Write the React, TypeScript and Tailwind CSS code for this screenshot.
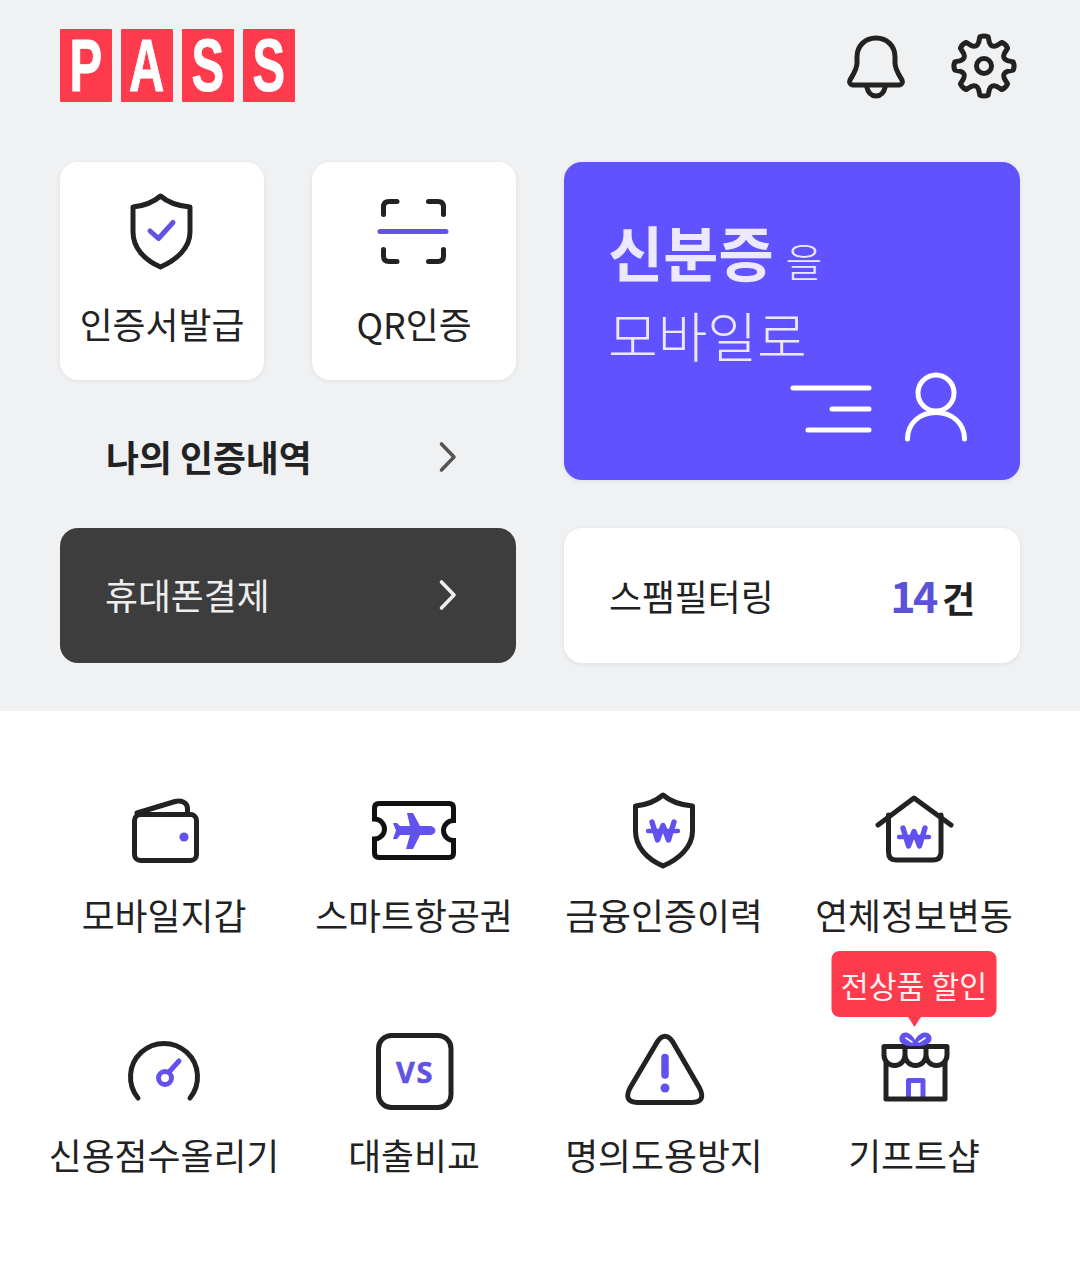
import React from "react";

const INK = "#222222";
const PURPLE = "#6152e0";

const gearPath = (() => {
  const cx = 984;
  const cy = 65;
  const pts: string[] = [];
  for (let k = 0; k < 8; k++) {
    const a = (k * 45 * Math.PI) / 180;
    const p = (r: number, d: number) => {
      const t = a + (d * Math.PI) / 180 - Math.PI / 2;
      return `${(cx + r * Math.cos(t)).toFixed(1)} ${(cy + r * Math.sin(t)).toFixed(1)}`;
    };
    const vt = a + (22.5 * Math.PI) / 180 - Math.PI / 2;
    const valley = `${(cx + 19.5 * Math.cos(vt)).toFixed(1)} ${(cy + 19.5 * Math.sin(vt)).toFixed(1)}`;
    pts.push(`${k === 0 ? "M" : "L"}${p(24, -13)} L${p(29.5, -8)} Q${p(31, 0)} ${p(29.5, 8)} L${p(24, 13)} Q${valley} ${p(24, 32)}`);
  }
  return pts.join(" ") + " Z";
})();

const Chevron = ({ color, className }: { color: string; className?: string }) => (
  <svg width="20" height="32" viewBox="0 0 20 32" fill="none" stroke={color} strokeWidth="3.6" strokeLinecap="round" strokeLinejoin="round" className={className}>
    <path d="M3.5 3 L16 16 L3.5 29" />
  </svg>
);

const Won = ({ x, y }: { x: number; y: number }) => (
  <g transform={`translate(${x} ${y})`} fill="none" stroke="#6152f0" strokeWidth="5.4" strokeLinecap="round" strokeLinejoin="round">
    <path d="M-11 -9 L-5.5 9 L0 -5.5 L5.5 9 L11 -9" />
    <path d="M-15 0 H15" strokeWidth="4.4" />
  </g>
);

const shieldD = "M160 196 C152 203 142 206 132.5 207 L132.5 232 C132.5 248 144 260 160 267 C176 260 189.5 248 189.5 232 L189.5 207 C178 206 168 203 160 196 Z";

const icons: Record<string, React.ReactNode> = {
  wallet: (
    <svg width="100" height="80" viewBox="114 790 100 80" fill="none">
      <rect x="134.5" y="814.5" width="62" height="46" rx="6" stroke={INK} strokeWidth="5" />
      <path d="M137 813 L175 801.5 C181 800 187 802 187.5 808 L187.5 814" stroke={INK} strokeWidth="5" strokeLinecap="round" />
      <circle cx="184" cy="837" r="4.6" fill="#6152f0" />
    </svg>
  ),
  ticket: (
    <svg width="100" height="80" viewBox="364 790 100 80" fill="none">
      <path
        d="M379 803.5 H449 Q453.5 803.5 453.5 808 V820.5 A10 10 0 0 0 453.5 840.5 V853 Q453.5 857.5 449 857.5 H379 Q374.5 857.5 374.5 853 V839 A10 10 0 0 0 374.5 819 V808 Q374.5 803.5 379 803.5 Z"
        stroke="#111111"
        strokeWidth="5"
      />
      <path
        d="M407 813 L413 813 L420 826 L431 826 Q435 827 435.5 830.5 Q435 834 431 835 L420 835 L413 849 L406 849 L410 835 L400 835 L397 839 L393 839 L396 830.5 L393 823 L397 823 L400 826 L410 826 Z"
        fill="#6152f0"
      />
    </svg>
  ),
  shieldWon: (
    <svg width="100" height="80" viewBox="614 790 100 80" fill="none">
      <path d={shieldD} transform="translate(503 599)" stroke={INK} strokeWidth="5" strokeLinejoin="round" />
      <Won x={663} y={831} />
    </svg>
  ),
  house: (
    <svg width="100" height="80" viewBox="864 790 100 80" fill="none" stroke={INK} strokeWidth="5" strokeLinecap="round" strokeLinejoin="round">
      <path d="M878 825 L914 798 L951 825" />
      <path d="M888.5 815 V852 Q888.5 860 896 860 H933 Q941 860 941 852 V815" />
      <Won x={914} y={837} />
    </svg>
  ),
  gauge: (
    <svg width="100" height="80" viewBox="114 1030 100 80" fill="none" strokeLinecap="round">
      <path d="M138 1098 A33.5 33.5 0 1 1 190 1098" stroke={INK} strokeWidth="5" />
      <circle cx="165" cy="1078" r="6.5" stroke="#6152f0" strokeWidth="5" />
      <path d="M169 1072 L179 1061" stroke="#6152f0" strokeWidth="5" />
    </svg>
  ),
  vs: (
    <svg width="100" height="80" viewBox="364 1030 100 80" fill="none">
      <rect x="378.5" y="1035.5" width="72.5" height="72" rx="13" stroke={INK} strokeWidth="5" />
      <text
        x="415"
        y="1083"
        textAnchor="middle"
        fill={PURPLE}
        stroke={PURPLE}
        strokeWidth="0.6"
        letterSpacing="1.5"
        fontSize="29"
        fontWeight="700"
        fontFamily="'Noto Sans',sans-serif"
      >
        VS
      </text>
    </svg>
  ),
  warning: (
    <svg width="100" height="80" viewBox="614 1030 100 80" fill="none" strokeLinecap="round">
      <path d="M657.5 1041.5 Q665 1031 672.5 1041.5 L699.5 1088 Q706.5 1102 692 1102.5 L637.5 1102.5 Q623 1102 630 1088 Z" stroke={INK} strokeWidth="5" strokeLinejoin="round" />
      <path d="M665 1057.5 V1075" stroke="#6152f0" strokeWidth="7.5" />
      <circle cx="665" cy="1088" r="4.5" fill="#6152f0" />
    </svg>
  ),
  store: (
    <svg width="100" height="80" viewBox="864 1030 100 80" fill="none" strokeLinejoin="round">
      <path d="M908.5 1099 V1080.5 H923 V1099" stroke="#6152f0" strokeWidth="5" />
      <path d="M884 1046.5 H947 V1055 A10.5 10.5 0 0 1 926 1055 A10.5 10.5 0 0 1 905 1055 A10.5 10.5 0 0 1 884 1055 Z M905 1047 V1055 M926 1047 V1055" stroke={INK} strokeWidth="5" />
      <path d="M886 1062 V1099 H945 V1062" stroke={INK} strokeWidth="5" />
      <path d="M915 1040 C911 1032 903 1030 900 1036 C897 1043 905 1047 915 1046 C925 1047 934 1043 931 1036 C928 1030 919 1032 915 1040 Z" fill="#6152f0" />
      <path d="M906 1038 L912 1042 M925 1038 L919 1042" stroke="#ffffff" strokeWidth="1.6" strokeLinecap="round" />
    </svg>
  ),
};

const menu = [
  { label: "모바일지갑", icon: "wallet" },
  { label: "스마트항공권", icon: "ticket" },
  { label: "금융인증이력", icon: "shieldWon" },
  { label: "연체정보변동", icon: "house" },
  { label: "신용점수올리기", icon: "gauge" },
  { label: "대출비교", icon: "vs" },
  { label: "명의도용방지", icon: "warning" },
  { label: "기프트샵", icon: "store", badge: "전상품 할인" },
];

const cardShadow = "shadow-[0_1px_5px_rgba(0,0,0,0.08)]";

export default function App() {
  return (
    <div className="min-h-[1276px] w-[1080px] bg-white font-['Noto_Sans_CJK_KR','Noto_Sans',sans-serif] text-[#222222]">
      <section className="bg-[#f0f1f3] px-[60px] pt-[29px] pb-[48px]">
        {/* Header */}
        <header className="flex h-[73px] items-center justify-between">
          <div className="flex gap-[9px]">
            {["P", "A", "S", "S"].map((letter, i) => (
              <span
                key={i}
                className="flex h-[73px] w-[52px] items-center justify-center rounded-[1px] bg-[#fd3b4d] font-['Liberation_Sans',sans-serif] text-[74px] leading-[60px] font-bold text-white"
              >
                <span className="inline-block scale-x-[0.66] [-webkit-text-stroke:1px_white]">{letter}</span>
              </span>
            ))}
          </div>
          <svg width="180" height="80" viewBox="840 25 180 80" fill="none" stroke={INK} strokeWidth="5" strokeLinecap="round" strokeLinejoin="round" className="shrink-0">
            <path d="M876 37 C865 37 857 45 857 56 L857 62 C857 68 853 74 850 79 C849 81 850 84 853 84 L899 84 C902 84 903 81 902 79 C899 74 895 68 895 62 L895 56 C895 45 887 37 876 37 Z" />
            <path d="M866.5 85 C868 92 872 95 876 95 C880 95 884 92 885.5 85" />
            <path d={gearPath} />
            <circle cx="984" cy="65" r="7.5" />
          </svg>
        </header>

        <div className="mt-[60px] grid grid-cols-2 gap-x-12 gap-y-12">
          <div className="flex flex-col">
            <div className="grid grid-cols-2 gap-x-12">
              <div className={`flex h-[218px] flex-col items-center rounded-[18px] bg-white ${cardShadow}`}>
                <svg width="100" height="90" viewBox="111.5 190 100 90" fill="none" className="mt-[28px]">
                  <path d={shieldD} stroke={INK} strokeWidth="5" strokeLinejoin="round" />
                  <path d="M149.5 231 L158 238.5 L172.5 222.5" stroke="#6152e0" strokeWidth="5" strokeLinecap="round" strokeLinejoin="round" />
                </svg>
                <span className="mt-[17px] text-[35.8px] leading-[52px]">인증서발급</span>
              </div>
              <div className={`flex h-[218px] flex-col items-center rounded-[18px] bg-white ${cardShadow}`}>
                <svg width="100" height="90" viewBox="364 190 100 90" fill="none" strokeWidth="5" strokeLinecap="round" className="mt-[28px]">
                  <path d="M383.5 214.5 V207 Q383.5 201.5 389 201.5 H397 M428.5 201.5 H438 Q443.5 201.5 443.5 207 V214.5 M383.5 249.5 V256 Q383.5 261.5 389 261.5 H397 M428.5 261.5 H438 Q443.5 261.5 443.5 256 V249.5" stroke={INK} />
                  <path d="M380 231.5 H446" stroke="#6152e0" />
                </svg>
                <span className="mt-[17px] text-[35.8px] leading-[52px]">QR인증</span>
              </div>
            </div>
            <div className="flex h-[100px] items-center justify-between pt-[52px] pr-[58px] pl-[46px]">
              <span className="text-[35.8px] leading-[46px] font-bold">나의 인증내역</span>
              <Chevron color="#555555" className="mt-[2px]" />
            </div>
          </div>

          {/* Purple ID card */}
          <div className={`flex h-[318px] flex-col rounded-[18px] bg-[#6152ff] pt-[48px] pl-[44px] text-[#ece8ff] ${cardShadow}`}>
            <p className="flex h-[82px] items-baseline text-[60px] leading-[82px] font-bold">
              신분증
              <span className="ml-[12px] text-[40px] leading-none font-light">을</span>
            </p>
            <p className="mt-[8px] h-[70px] text-[54px] leading-[70px] font-light">모바일로</p>
            <svg width="190" height="75" viewBox="785 370 190 75" fill="none" stroke="#ffffff" strokeWidth="5" strokeLinecap="round" className="mt-auto mr-[45px] mb-[35px] shrink-0 self-end">
              <path d="M793 388 H869 M832 409 H869 M808 430 H869" />
              <circle cx="936" cy="393" r="18" />
              <path d="M907.5 439 C907.5 423 920 412.5 936 412.5 C952 412.5 964.5 423 964.5 439" />
            </svg>
          </div>

          <div className="flex h-[135px] items-center justify-between rounded-[18px] bg-[#3d3d3d] pr-[58px] pl-[45px] text-[#eeeeee]">
            <span className="pb-[1px] text-[35.8px]">휴대폰결제</span>
            <Chevron color="#eeeeee" className="mb-[2px]" />
          </div>

          <div className={`flex h-[135px] items-center justify-between rounded-[18px] bg-white pr-[45px] pl-[45px] ${cardShadow}`}>
            <span className="text-[35.8px]">스팸필터링</span>
            <span className="flex items-baseline pb-[3px]">
              <span className="text-[43px] leading-none font-bold tracking-[-2.5px] text-[#5b52d6]">14</span>
              <span className="ml-[6px] text-[36px] leading-none font-bold">건</span>
            </span>
          </div>
        </div>
      </section>

      {/* Service menu */}
      <section className="grid grid-cols-4 gap-y-[91px] pt-[79px] pr-[41px] pl-[39px]">
        {menu.map((item) => (
          <div key={item.label} className="relative flex flex-col items-center">
            {item.badge && (
              <div className="absolute top-[-79px] left-1/2 flex h-[66px] w-[165px] -translate-x-1/2 items-center justify-center rounded-[8px] bg-[#fd3b4d] pt-[4px] text-[30.4px] text-[#fff0f0]">
                {item.badge}
                <span className="absolute top-[65px] left-1/2 h-0 w-0 -translate-x-1/2 border-x-[7px] border-t-[11px] border-x-transparent border-t-[#fd3b4d]" />
              </div>
            )}
            {icons[item.icon]}
            <span className="mt-[19px] text-[35.8px] leading-[50px] whitespace-nowrap">{item.label}</span>
          </div>
        ))}
      </section>
    </div>
  );
}
